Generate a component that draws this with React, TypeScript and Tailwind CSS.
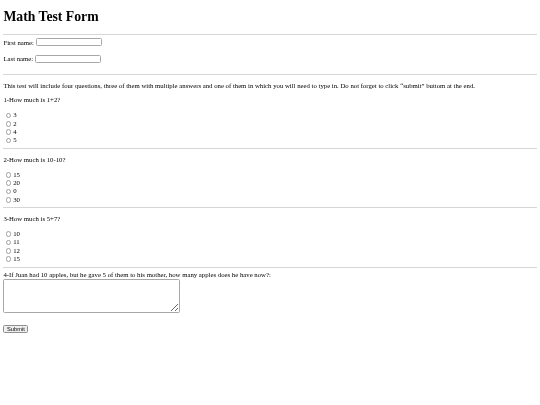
const questions = [
  { label: '1-How much is 1+2?', name: 'q1', options: ['3', '2', '4', '5'] },
  { label: '2-How much is 10-10?', name: 'q2', options: ['15', '20', '0', '30'] },
  { label: '3-How much is 5+7?', name: 'q3', options: ['10', '11', '12', '15'] },
];

function Rule() {
  return <hr className="my-[3.43px] h-[0.86px] border-0 bg-[#d6d6d6]" />;
}

function NameField({ label }: { label: string }) {
  return (
    <div className="flex h-[8.2px] items-center whitespace-pre">
      {label}{' '}
      <input
        type="text"
        className="h-[8px] w-[66px] rounded-[1.5px] border border-[#a8a8a8] bg-white"
      />
    </div>
  );
}

export default function App() {
  return (
    <div className="min-h-[405px] bg-white px-[3.43px] pt-[0.1px] font-['Liberation_Serif',serif] text-[6.75px] leading-[7.9px] text-black will-change-transform">
      <h1 className="my-[9.1px] text-[13.71px] font-bold leading-[15.8px]">Math Test Form</h1>
      <Rule />
      <form onSubmit={(e) => e.preventDefault()}>
        <NameField label="First name:" />
        <div className="h-[7.9px]" />
        <NameField label="Last name:" />
        <div className="h-[7.9px]" />
        <Rule />
        <p className="my-[6.86px]">
          This test will include four questions, three of them with multiple answers and one of them in which you
          will need to type in. Do not forget to click “submit” buttom at the end.
        </p>
        {questions.map((q) => (
          <div key={q.name}>
            <p className="my-[6.86px]">{q.label}</p>
            {q.options.map((o) => (
              <label key={o} className="flex h-[8.36px] items-center">
                <input
                  type="radio"
                  name={q.name}
                  className="ml-[2.14px] mr-[2px] h-[5.6px] w-[5.6px] appearance-none rounded-full border border-[#a0a0a0] bg-white"
                />
                {o}
              </label>
            ))}
            <Rule />
          </div>
        ))}
        <div>4-If Juan had 10 apples, but he gave 5 of them to his mother, how many apples does he have now?:</div>
        <textarea className="block h-[34px] w-[177px] resize rounded-[1.5px] border border-[#a8a8a8] bg-white" />
        <div className="mt-[12px]">
          <button
            type="submit"
            className="block h-[8px] rounded-[1.5px] border border-[#8f8f8f] bg-[#efefef] px-[2.6px] font-['Liberation_Sans',sans-serif] text-[5.7px] leading-[6px]"
          >
            Submit
          </button>
        </div>
      </form>
    </div>
  );
}
